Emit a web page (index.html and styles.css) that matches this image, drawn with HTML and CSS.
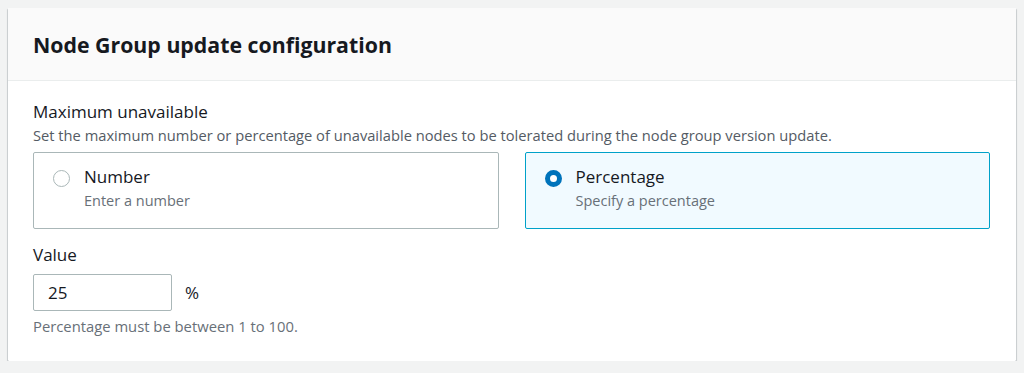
FILE: index.html
```html
<!DOCTYPE html>
<html lang="en">
<head>
    <meta charset="UTF-8">
    <title>Node Group update configuration</title>
    <link rel="stylesheet" href="styles.css">
</head>
<body>
    <div class="panel">
        <div class="panel-header">
            <h2>Node Group update configuration</h2>
        </div>
        <div class="panel-body">
            <div class="field-label">Maximum unavailable</div>
            <div class="field-desc">Set the maximum number or percentage of unavailable nodes to be tolerated during the node group version update.</div>

            <div class="tiles">
                <label class="tile">
                    <span class="radio"></span>
                    <span class="tile-text">
                        <span class="tile-title">Number</span>
                        <span class="tile-sub">Enter a number</span>
                    </span>
                </label>
                <label class="tile selected">
                    <span class="radio checked"></span>
                    <span class="tile-text">
                        <span class="tile-title">Percentage</span>
                        <span class="tile-sub">Specify a percentage</span>
                    </span>
                </label>
            </div>

            <div class="field-label value-label">Value</div>
            <div class="value-row">
                <input class="value-input" type="text" value="25">
                <span class="unit">%</span>
            </div>
            <div class="hint">Percentage must be between 1 to 100.</div>
        </div>
    </div>
</body>
</html>
```

FILE: styles.css
```css
body {
    font-family: "Open Sans", "Noto Sans", sans-serif;
    margin: 0;
    padding: 8px 8px 0 8px;
    background-color: #f2f3f3;
    color: #16191f;
}
.panel {
    background-color: #fff;
    border-radius: 1px;
    box-shadow: 0 1px 1px rgba(0,28,36,0.3), 1px 1px 1px rgba(0,28,36,0.15), -1px 1px 1px rgba(0,28,36,0.15);
    height: 353px;
}
.panel-header {
    background-color: #fafafa;
    border-bottom: 1px solid #eaeded;
    height: 72px;
    padding: 0 25px;
    display: flex;
    align-items: center;
}
.panel-header h2 {
    margin: 0;
    font-size: 21.3px;
    font-weight: 700;
}
.panel-body {
    padding: 20px 26px 0 25px;
}
.field-label {
    font-size: 17px;
    line-height: 22px;
}
.field-desc {
    font-size: 14.7px;
    line-height: 20px;
    color: #545b64;
    margin-top: 2px;
}
.tiles {
    display: flex;
    gap: 26px;
    margin-top: 7px;
}
.tile {
    flex: 1;
    height: 77px;
    box-sizing: border-box;
    border: 1px solid #aab7b8;
    border-radius: 2px;
    display: flex;
    padding: 13px 19px;
    gap: 14px;
}
.tile.selected {
    background-color: #f1faff;
    border-color: #00a1c9;
}
.radio {
    width: 17px;
    height: 17px;
    box-sizing: border-box;
    border: 1.5px solid #aab7b8;
    border-radius: 50%;
    margin-top: 4px;
    flex: none;
}
.radio.checked {
    border: 5px solid #0073bb;
    background-color: #fff;
}
.tile-text {
    display: flex;
    flex-direction: column;
}
.tile-title {
    font-size: 17px;
    line-height: 22px;
}
.tile-sub {
    font-size: 14.5px;
    line-height: 21px;
    color: #687078;
    margin-top: 2px;
}
.value-label {
    margin-top: 15px;
}
.value-row {
    display: flex;
    align-items: center;
    gap: 13px;
    margin-top: 8px;
}
.value-input {
    width: 139px;
    height: 37px;
    box-sizing: border-box;
    border: 1px solid #aab7b8;
    border-radius: 2px;
    padding: 0 14px;
    font-family: inherit;
    font-size: 17px;
    color: #16191f;
}
.unit {
    font-size: 17px;
}
.hint {
    font-size: 14.8px;
    line-height: 20px;
    color: #687078;
    margin-top: 5px;
}
```
